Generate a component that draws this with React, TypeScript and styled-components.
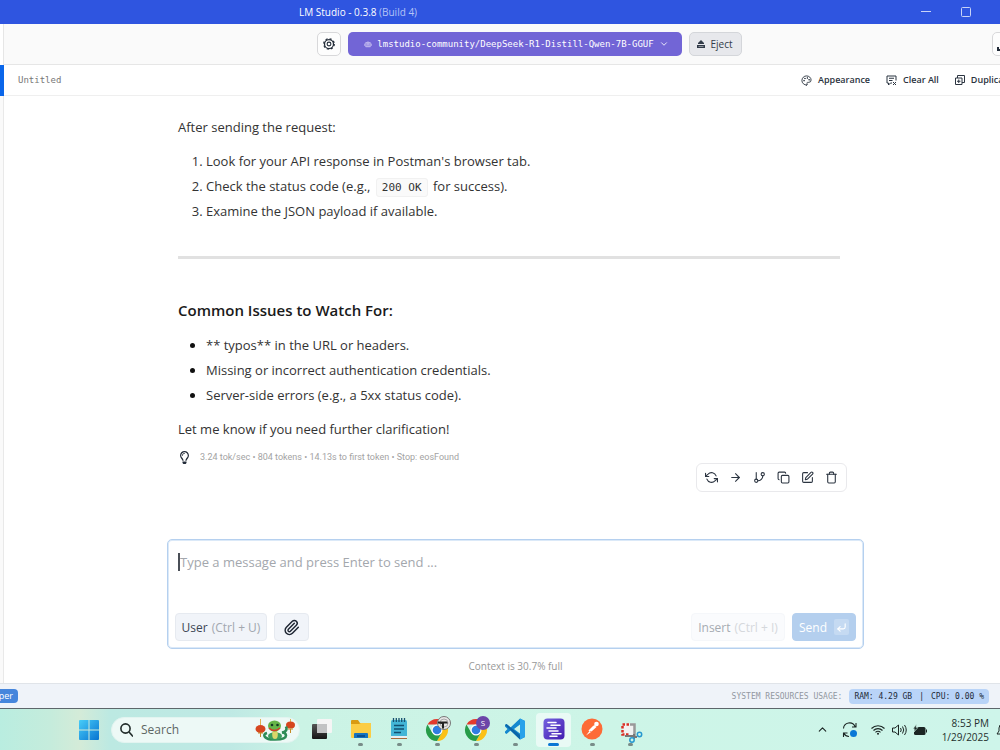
import React from "react";
import styled, { createGlobalStyle, css } from "styled-components";
import { ArrowRight, GitBranch, Copy, SquarePen, Trash, Paperclip, Palette, ChevronDown, ChevronUp, CornerDownLeft } from "lucide-react";
import { FiRefreshCcw } from "react-icons/fi";
import { FaRegLightbulb, FaRobot } from "react-icons/fa";

const sans = `"Open Sans", "Noto Sans", sans-serif`;
const mono = `"DejaVu Sans Mono", monospace`;

const GlobalStyle = createGlobalStyle`
  *, *::before, *::after { box-sizing: border-box; }
  html, body { margin: 0; }
  body { font-family: ${sans}; font-size: 13px; color: #333; background: #fff; overflow-x: hidden; }
  button, input, textarea { font: inherit; color: inherit; margin: 0; }
  button { border: 0; background: none; padding: 0; display: flex; align-items: center; justify-content: center; white-space: nowrap; }
  svg { flex: none; display: block; }
`;

const Screen = styled.div`
  min-height: 100vh;
  display: flex;
  flex-direction: column;
`;

const TitleBar = styled.header`
  height: 24px;
  flex: none;
  display: flex;
  align-items: center;
  justify-content: space-between;
  padding-left: 299px;
  background: #2f55e0;
  color: #fff;
  font-size: 10px;
`;
const Build = styled.span`
  color: #b4c3f6;
`;
const WindowButtons = styled.div`
  display: flex;
  padding-right: 14px;
`;
const WindowButton = styled.button`
  width: 40px;
  height: 22px;
`;

const ModelBar = styled.div`
  height: 41px;
  flex: none;
  display: flex;
  align-items: center;
  margin-left: 3px;
  border-left: 1px solid #e6e6e6;
  border-bottom: 1px solid #e6e6e6;
  background: #fafafa;
`;
const ModelControls = styled.div`
  flex: 1;
  display: flex;
  justify-content: center;
  gap: 7px;
  padding-left: 62px;
`;
const SquareButton = styled.button`
  width: 24px;
  height: 24px;
  flex: none;
  border: 1px solid #d8d8da;
  border-radius: 5px;
  background: #fdfdfd;
  color: #222b38;
`;
const ModelButton = styled.button`
  height: 24px;
  width: 334px;
  gap: 5px;
  padding-left: 4px;
  border-radius: 5px;
  background: #7265d6;
  color: #fff;
  font-family: ${mono};
  font-size: 9px;
`;
const EjectButton = styled.button`
  height: 24px;
  width: 53px;
  gap: 5px;
  border: 1px solid #d4d6da;
  border-radius: 5px;
  background: #e7e8ec;
  color: #333c49;
  font-size: 10px;
`;
const EdgeClip = styled.div`
  width: 8px;
  overflow: hidden;
`;

const Body = styled.div`
  flex: 1;
  display: flex;
`;
const Rail = styled.div`
  width: 4px;
  flex: none;
  background: #fafafa;
  border-right: 1px solid #e9e9e9;
`;
const RailMark = styled.div`
  width: 4px;
  height: 31px;
  background: #0a66ea;
`;
const Chat = styled.main`
  flex: 1;
  min-width: 0;
  display: flex;
  flex-direction: column;
`;
const ChatHeader = styled.div`
  height: 31px;
  flex: none;
  display: flex;
  align-items: center;
  justify-content: space-between;
  padding-left: 14px;
  border-bottom: 1px solid #efefef;
`;
const ChatTitle = styled.span`
  font-family: ${mono};
  font-size: 9px;
  color: #777;
`;
const ChatTools = styled.div`
  width: 199px;
  display: flex;
  gap: 16px;
  overflow: hidden;
`;
const ToolButton = styled.button`
  gap: 6px;
  font-size: 9px;
  line-height: 16px;
  font-weight: 600;
  color: #2b3440;
`;

const Column = styled.div`
  flex: 1;
  width: 100%;
  padding-left: 27px;
  display: flex;
  flex-direction: column;
  align-items: center;
`;
const Message = styled.article`
  width: 100%;
  max-width: 697px;
  flex: 1;
  padding: 19px 17px 40px 11px;
`;
const Prose = styled.div`
  padding-right: 7px;
  font-size: 13px;
  line-height: 25px;
`;
const Paragraph = styled.p`
  margin: 0;
`;
const list = css`
  margin: 9px 0;
  padding-left: 28px;
`;
const Numbered = styled.ol`${list}`;
const Bulleted = styled.ul`
  ${list}
  li::marker { color: #111; }
`;
const Code = styled.code`
  padding: 2px 5px;
  margin: 0 2px;
  border: 1px solid #f1f1f1;
  border-radius: 3px;
  background: #fafafa;
  font-family: ${mono};
  font-size: 11px;
  line-height: 12px;
`;
const Rule = styled.hr`
  height: 3px;
  margin: 32px 0 39px;
  border: 0;
  background: #e1e1e1;
`;
const Heading = styled.h3`
  margin: 0 0 10px;
  font-size: 15px;
  line-height: 25px;
  font-weight: 600;
  color: #1a1a1a;
`;
const MessageFooter = styled.div`
  display: flex;
  justify-content: space-between;
  padding-top: 7px;
`;
const Stats = styled.div`
  display: flex;
  align-items: center;
  gap: 9px;
  height: 16px;
  font-family: Roboto, ${sans};
  font-size: 9px;
  color: #a3a3a3;
  svg { color: #222b38; }
`;
const Actions = styled.div`
  display: flex;
  width: 151px;
  height: 29px;
  margin-top: 14px;
  padding: 0 2px;
  border: 1px solid #e9e9ec;
  border-radius: 6px;
  color: #2b3440;
`;
const Action = styled.button`
  flex: 1;
`;

const Composer = styled.form`
  width: 100%;
  max-width: 697px;
  height: 110px;
  flex: none;
  display: flex;
  flex-direction: column;
  justify-content: space-between;
  padding: 11px 7px 7px;
  border: 1px solid #b5d0ef;
  border-radius: 5px;
  box-shadow: inset 0 0 0 1px #dbe9f8;
`;
const InputRow = styled.div`
  display: flex;
  align-items: center;
  padding-left: 3px;
`;
const Caret = styled.span`
  width: 2px;
  height: 18px;
  background: #4a4f57;
`;
const Input = styled.textarea`
  flex: 1;
  height: 22px;
  padding: 0;
  border: 0;
  outline: 0;
  resize: none;
  background: none;
  font-size: 13px;
  line-height: 22px;
  &::placeholder { color: #a3a7ad; opacity: 1; }
`;
const ComposerButtons = styled.div`
  display: flex;
  gap: 7px;
`;
const ComposerButton = styled.button<{ $width: number; $tone?: "faded" | "send" }>`
  width: ${(p) => p.$width}px;
  height: 28px;
  gap: 4px;
  border: 1px solid #e6eaf0;
  border-radius: 4px;
  background: #f1f4f9;
  color: #3d4654;
  font-size: 12px;
  ${(p) => p.$tone === "faded" && css`
    margin-left: auto;
    border-color: #f5f7fa;
    background: #fafbfd;
    color: #a6abb2;
  `}
  ${(p) => p.$tone === "send" && css`
    gap: 7px;
    border-color: #b4cfee;
    background: #b4cfee;
    color: #fff;
  `}
`;
const Shortcut = styled.span<{ $faded?: boolean }>`
  color: ${(p) => (p.$faded ? "#d5d8dc" : "#a2a7af")};
`;
const EnterKey = styled.span`
  width: 15px;
  height: 16px;
  display: flex;
  align-items: center;
  justify-content: center;
  border-radius: 2px;
  background: #c5daf2;
`;
const ContextNote = styled.div`
  height: 34px;
  flex: none;
  line-height: 34px;
  font-size: 10px;
  color: #999;
`;

const StatusBar = styled.footer`
  height: 25px;
  flex: none;
  display: flex;
  align-items: center;
  justify-content: space-between;
  padding-right: 11px;
  border-top: 1px solid #e0e4e9;
  background: #eff3f9;
`;
const ModeBadge = styled.span`
  width: 18px;
  height: 14px;
  display: flex;
  justify-content: flex-end;
  padding-right: 5px;
  overflow: hidden;
  border-radius: 0 4px 4px 0;
  background: #4686dc;
  color: #fff;
  font-size: 9px;
  line-height: 14px;
`;
const Usage = styled.div`
  display: flex;
  align-items: center;
  gap: 7px;
  font-family: ${mono};
  font-size: 8px;
  color: #9298a1;
`;
const UsageBadge = styled.span`
  display: flex;
  gap: 7px;
  height: 15px;
  padding: 0 5px;
  line-height: 15px;
  border-radius: 4px;
  background: #b9d4f8;
  color: #222b38;
`;

const Taskbar = styled.nav`
  height: 42px;
  flex: none;
  display: flex;
  align-items: center;
  padding-left: 70px;
  border-top: 1px solid #5d666b;
  background: linear-gradient(90deg, #b9ede0 0, #c5ecdc 50px, #d4ebd8 80px, #bce9e2 110px, #bfe9e4 230px, #cbf3e5 300px, #cdf5e7 600px, #cef5ea 100%);
`;
const StartButton = styled.button`
  width: 38px;
  height: 40px;
  margin-right: 3px;
`;
const SearchBox = styled.label`
  width: 189px;
  height: 26px;
  flex: none;
  display: flex;
  align-items: center;
  gap: 8px;
  padding: 0 4px 0 8px;
  margin-right: 3px;
  border-radius: 13px;
  background: #edf9f6;
  border: 1px solid #e2f4f0;
`;
const SearchInput = styled.input`
  flex: 1;
  min-width: 0;
  padding: 0;
  border: 0;
  outline: 0;
  background: none;
  font-size: 12px;
  &::placeholder { color: #5d6664; opacity: 1; }
`;
const Apps = styled.div`
  display: flex;
  width: 347px;
  flex: none;
`;
const AppButton = styled.button<{ $state?: "open" | "active" }>`
  flex: 1;
  height: 34px;
  margin: 0 2px;
  flex-direction: column;
  justify-content: flex-end;
  padding: 0 0 1px;
  border-radius: 4px;
  background: ${(p) => (p.$state === "active" ? "#e9faf5" : "transparent")};
  &::after {
    content: "";
    width: ${(p) => (p.$state === "active" ? 11 : 5)}px;
    height: 3px;
    border-radius: 2px;
    background: ${(p) => (p.$state === "active" ? "#0a77d4" : p.$state ? "#788c88" : "transparent")};
  }
`;
const AppIcon = styled.span`
  height: 27px;
  display: flex;
  align-items: center;
  justify-content: center;
`;
const Tray = styled.div`
  margin-left: auto;
  display: flex;
  align-items: center;
  color: #1b2523;
`;
const TrayButton = styled.button<{ $width: number }>`
  width: ${(p) => p.$width}px;
  height: 36px;
`;
const Clock = styled.time`
  width: 56px;
  padding-right: 1px;
  text-align: right;
  white-space: nowrap;
  font-size: 10px;
  line-height: 14px;
  color: #24302d;
`;
const BellClip = styled.span`
  width: 10px;
  padding-left: 6px;
  overflow: hidden;
`;

const EjectIcon = () => (
  <svg width="8" height="8" viewBox="0 0 16 16" fill="currentColor">
    <path d="M8 0 14 6v2H2V6z" /><path d="M0 10h16v6H0zM3 12v1h10v-1z" fillRule="evenodd" />
  </svg>
);
const ClearIcon = () => (
  <svg width="11" height="11" viewBox="0 0 22 22" fill="none" stroke="currentColor" strokeWidth="2">
    <path d="M20 11V2H2v14h3v4l4-4h3M6 6.500h10M6 11h7M14 14l6 6M20 14l-6 6" />
  </svg>
);
const DuplicateIcon = () => (
  <svg width="10" height="10" viewBox="0 0 20 20" fill="none" stroke="currentColor" strokeWidth="2">
    <path d="M1 6h13v13H1zM5 6V1h14v14h-5M7.500 9v7M4 12.500h7" />
  </svg>
);
const WindowsLogo = () => (
  <svg width="20" height="20" viewBox="0 0 20 20">
    <defs><linearGradient id="win" x1="0" y1="0" x2="1" y2="1"><stop stopColor="#48cdf8" /><stop offset="1" stopColor="#0873d1" /></linearGradient></defs>
    <path fill="url(#win)" d="M1 0h8.500v9.500H0V1q0-1 1-1zM10.500 0H19q1 0 1 1v8.500h-9.500zM0 10.500h9.500V20H1q-1 0-1-1zM10.500 10.500H20V19q0 1-1 1h-8.500z" />
  </svg>
);
const Snake = () => (
  <svg width="40" height="22" viewBox="0 0 40 22">
    <path d="M5.500 0v6M35.500 0v4" stroke="#e0b050" />
    <ellipse cx="5.500" cy="10" rx="5" ry="4" fill="#d6461f" /><path d="M3 14h5M5.500 14v4" stroke="#c58a25" />
    <ellipse cx="35.500" cy="6" rx="4.500" ry="3.500" fill="#d6461f" /><path d="M33 10h5M35.500 10v4" stroke="#c58a25" />
    <path d="M12 14q-4 1-2 4 3 3 10 2.500 11 0 11-4 0-3-4-3 6-1 4-6" fill="none" stroke="#2d8b57" strokeWidth="2.600" />
    <ellipse cx="20" cy="17" rx="7" ry="3.800" fill="#3c9d60" /><ellipse cx="20" cy="15.500" rx="2.800" ry="4.500" fill="#d9d66a" />
    <ellipse cx="19.500" cy="7" rx="6.500" ry="5.500" fill="#66b548" /><path d="M14 9q5 5 11 0" stroke="#d63b2a" fill="none" strokeWidth="1.500" />
    <circle cx="17" cy="6" r="1.300" fill="#153b24" /><circle cx="22.500" cy="6" r="1.300" fill="#153b24" />
  </svg>
);
const TaskViewIcon = () => (
  <svg width="22" height="20" viewBox="0 0 22 20">
    <defs><linearGradient id="tv" x1="0" y1="0" x2="0" y2="1"><stop stopColor="#555" /><stop offset="1" stopColor="#151515" /></linearGradient></defs>
    <rect x="1" y="5" width="15" height="15" rx="1" fill="url(#tv)" /><rect x="6" y="0" width="15" height="14" rx="1" fill="#f5f5f5" /><path d="M6 5h10v9H6z" fill="#c2c3c4" />
  </svg>
);
const FolderIcon = () => (
  <svg width="22" height="20" viewBox="0 0 22 20">
    <path d="M1 2q0-1 1-1h6l2 3h11v7H1z" fill="#d99b12" /><path d="M1 5h8l2-1h10v14q0 1-1 1H2q-1 0-1-1z" fill="#fbcd44" />
    <path d="M4 19v-4q0-1 1-1h12q1 0 1 1v4z" fill="#1673be" /><path d="M7 16h8v2H7z" fill="#0b4e8f" />
  </svg>
);
const NotepadIcon = () => (
  <svg width="18" height="22" viewBox="0 0 18 22">
    <rect x="1" y="2" width="16" height="19" rx="1.500" fill="#43b5d6" /><path d="M1 18h16v2q0 1-1 1H2q-1 0-1-1z" fill="#e8eef0" /><path d="M1 20.500h16" stroke="#a66b3c" />
    <path d="M3.500 0v4M6.300 0v4M9 0v4M11.700 0v4M14.500 0v4" stroke="#17516f" strokeWidth="1.300" /><path d="M4 7.500h10M4 11h10M4 14.500h7" stroke="#124f70" strokeWidth="1.500" />
  </svg>
);
const ChromeIcon = ({ profile }: { profile: "work" | "personal" }) => (
  <svg width="26" height="26" viewBox="0 0 26 26">
    <path d="M2.470 8.500A11 11 0 0 1 21.530 8.500H12z" fill="#e33b2e" />
    <path d="M21.530 8.500A11 11 0 0 1 12 25L16.760 16.750 12 8.500z" fill="#fbc116" />
    <path d="M2.470 8.500A11 11 0 0 0 12 25L16.760 16.750H7.240z" fill="#279c49" />
    <circle cx="12" cy="14" r="5.500" fill="#fff" /><circle cx="12" cy="14" r="4.300" fill="#2f7de1" />
    {profile === "personal" ? (
      <><circle cx="19" cy="7" r="7" fill="#6c45a8" /><text x="19" y="10" fill="#fff" fontSize="8" textAnchor="middle" fontFamily="Open Sans, sans-serif">S</text></>
    ) : (
      <><circle cx="19" cy="7" r="6.500" fill="#e6e6e6" stroke="#777" /><circle cx="19" cy="7" r="4" fill="none" stroke="#aaa" /><path d="M13 5.500h9l1 2h-4v5h-2V8l-4-.5z" fill="#222" /></>
    )}
  </svg>
);
const CodeIcon = () => (
  <svg width="22" height="22" viewBox="0 0 22 22">
    <path d="M16 0.500 21 3v16l-5 2.500L6.500 12.500 2.500 16 1 15V7l1.500-1 4 3.500z" fill="#1588cf" />
    <path d="M1 7 2.500 6 16 17v4.500z" fill="#0b66a9" /><path d="M16 0.500 21 3v16l-5 2.500z" fill="#29a2ea" /><path d="M16 6.500v9L10 11zM1 8.500 3.500 11 1 13.500z" fill="#cdf5e7" />
  </svg>
);
const StudioIcon = () => (
  <svg width="22" height="22" viewBox="0 0 22 22">
    <defs><linearGradient id="lm" x1="0" y1="0" x2="1" y2="1"><stop stopColor="#7463df" /><stop offset="1" stopColor="#421bb0" /></linearGradient></defs>
    <rect x="0.500" y="0.500" width="21" height="21" rx="4" fill="url(#lm)" />
    <g stroke="#fff" strokeWidth="1.500" strokeLinecap="round"><path d="M5 4.500h8M8 7.300h9M4 10.100h9M6 12.900h9M9 15.700h9M7 18.300h7" /></g>
  </svg>
);
const PostmanIcon = () => (
  <svg width="22" height="22" viewBox="0 0 22 22">
    <circle cx="11" cy="11" r="10.500" fill="#fd6b36" /><circle cx="15.500" cy="6" r="2.300" fill="#fff" /><path d="M13.500 7 15.500 9l-5 4.500-2-1zM8.500 13l1.500 1-5 3.500z" fill="#fff" /><path d="M13 8 8 13" stroke="#fff" strokeWidth="1.500" />
  </svg>
);
const SnipIcon = () => (
  <svg width="22" height="22" viewBox="0 -4 22 22" fill="none" overflow="visible">
    <rect x="2.500" y="1.500" width="12" height="12" fill="#f2f2f2" /><path d="M10 2.500h4.500V16" stroke="#999" strokeWidth="2.500" /><path d="M9 2.500H2.500v10H9" stroke="#d92f25" strokeWidth="2.500" strokeDasharray="2.500 1.500" />
    <path d="M5 14h9M14 12v5M13 15h4" stroke="#777" strokeWidth="2" /><circle cx="19.500" cy="12.500" r="2.200" stroke="#2798d0" strokeWidth="1.500" /><circle cx="12" cy="18" r="2.200" stroke="#2798d0" strokeWidth="1.500" />
  </svg>
);
const SyncIcon = () => (
  <svg width="16" height="16" viewBox="0 0 16 16" fill="none" stroke="currentColor" strokeWidth="1.100">
    <path d="M1.500 6.500a6 6 0 0 1 11.500-2M14 1v4h-4M1.500 15v-4h4M2 11.500q1.500 3 5 3" /><circle cx="11.500" cy="11.500" r="3.500" fill="#0a78d6" stroke="none" />
  </svg>
);
const WifiIcon = () => (
  <svg width="14" height="11" viewBox="0 0 14 11" fill="none" stroke="currentColor" strokeWidth="1.100">
    <path d="M.5 4.500a9 9 0 0 1 13 0M2.500 6.500a6.300 6.300 0 0 1 9 0M4.500 8.300a3.500 3.500 0 0 1 5 0" /><circle cx="7" cy="9.700" r="1" fill="currentColor" stroke="none" />
  </svg>
);
const SpeakerIcon = () => (
  <svg width="15" height="12" viewBox="0 0 15 12" fill="none" stroke="currentColor">
    <path d="M.5 4h2.500l3.500-3v10L3 8H.5zM8.500 4q1.500 2 0 4M10.500 2.500q2.500 3.500 0 7M12.500 1q3.500 5 0 10" />
  </svg>
);
const BatteryIcon = () => (
  <svg width="14" height="12" viewBox="0 0 14 12">
    <rect x="1" y="3" width="11.500" height="8" rx="1.500" fill="currentColor" /><path d="M13 5.500h1v3h-1z" fill="currentColor" /><path d="M3.500 0 0 5h2L1 8l4-4.500H3z" fill="currentColor" stroke="#cef5ea" strokeWidth=".6" />
  </svg>
);

const apps = [
  { name: "File Explorer", icon: <FolderIcon />, state: "open" },
  { name: "Notepad", icon: <NotepadIcon />, state: "open" },
  { name: "Chrome, work", icon: <ChromeIcon profile="work" />, state: "open" },
  { name: "Chrome, personal", icon: <ChromeIcon profile="personal" />, state: "open" },
  { name: "Code editor", icon: <CodeIcon />, state: "open" },
  { name: "LM Studio", icon: <StudioIcon />, state: "active" },
  { name: "Postman", icon: <PostmanIcon />, state: "open" },
  { name: "Snipping Tool", icon: <SnipIcon />, state: "open" },
] as const;

const actions = [
  { name: "Regenerate", icon: <FiRefreshCcw size={13} /> },
  { name: "Continue", icon: <ArrowRight size={13} /> },
  { name: "Branch", icon: <GitBranch size={13} /> },
  { name: "Copy", icon: <Copy size={13} /> },
  { name: "Edit", icon: <SquarePen size={13} /> },
  { name: "Delete", icon: <Trash size={13} /> },
];

export default function App() {
  return (
    <Screen>
      <GlobalStyle />
      <TitleBar>
        <span>LM Studio - 0.3.8 <Build>(Build 4)</Build></span>
        <WindowButtons>
          <WindowButton aria-label="Minimize">
            <svg width="10" height="10" viewBox="0 0 10 10" stroke="#c9d3f7"><path d="M0 4.500h10" /></svg>
          </WindowButton>
          <WindowButton aria-label="Maximize">
            <svg width="10" height="10" viewBox="0 0 10 10" fill="none" stroke="#c9d3f7"><rect x=".5" y=".5" width="9" height="9" rx="1" /></svg>
          </WindowButton>
        </WindowButtons>
      </TitleBar>
      <ModelBar>
        <ModelControls>
          <SquareButton aria-label="Settings">
            <svg width="12" height="12" viewBox="0 0 24 24" fill="none" stroke="currentColor">
              <circle cx="12" cy="12" r="9" strokeWidth="2.500" />
              <circle cx="12" cy="12" r="10.500" strokeWidth="2.500" strokeDasharray="4.120 4.120" />
              <circle cx="12" cy="12" r="3.800" strokeWidth="2.200" />
            </svg>
          </SquareButton>
          <ModelButton>
            <FaRobot size={8} color="#b9b1ec" />
            lmstudio-community/DeepSeek-R1-Distill-Qwen-7B-GGUF
            <ChevronDown size={10} />
          </ModelButton>
          <EjectButton><EjectIcon />Eject</EjectButton>
        </ModelControls>
        <EdgeClip>
          <SquareButton aria-label="Downloads">
            <svg width="14" height="14" viewBox="0 0 14 14" fill="none" stroke="currentColor" strokeWidth="2"><path d="M1 10v3h12v-3M7 1v8M4 6l3 3 3-3" /></svg>
          </SquareButton>
        </EdgeClip>
      </ModelBar>
      <Body>
        <Rail><RailMark /></Rail>
        <Chat>
          <ChatHeader>
            <ChatTitle>Untitled</ChatTitle>
            <ChatTools>
              <ToolButton><Palette size={11} />Appearance</ToolButton>
              <ToolButton><ClearIcon />Clear All</ToolButton>
              <ToolButton><DuplicateIcon />Duplicate</ToolButton>
            </ChatTools>
          </ChatHeader>
          <Column>
            <Message>
              <Prose>
                <Paragraph>After sending the request:</Paragraph>
                <Numbered>
                  <li>Look for your API response in Postman's browser tab.</li>
                  <li>Check the status code (e.g., <Code>200 OK</Code> for success).</li>
                  <li>Examine the JSON payload if available.</li>
                </Numbered>
                <Rule />
                <Heading>Common Issues to Watch For:</Heading>
                <Bulleted>
                  <li>** typos** in the URL or headers.</li>
                  <li>Missing or incorrect authentication credentials.</li>
                  <li>Server-side errors (e.g., a 5xx status code).</li>
                </Bulleted>
                <Paragraph>Let me know if you need further clarification!</Paragraph>
              </Prose>
              <MessageFooter>
                <Stats>
                  <FaRegLightbulb size={13} />
                  3.24 tok/sec • 804 tokens • 14.13s to first token • Stop: eosFound
                </Stats>
                <Actions>
                  {actions.map((a) => <Action key={a.name} aria-label={a.name}>{a.icon}</Action>)}
                </Actions>
              </MessageFooter>
            </Message>
            <Composer onSubmit={(e) => e.preventDefault()}>
              <InputRow>
                <Caret />
                <Input aria-label="Message" placeholder="Type a message and press Enter to send ..." />
              </InputRow>
              <ComposerButtons>
                <ComposerButton type="button" $width={92}>User <Shortcut>(Ctrl + U)</Shortcut></ComposerButton>
                <ComposerButton type="button" $width={35} aria-label="Attach file"><Paperclip size={17} color="#1d2532" /></ComposerButton>
                <ComposerButton type="button" $width={94} $tone="faded">Insert <Shortcut $faded>(Ctrl + I)</Shortcut></ComposerButton>
                <ComposerButton $width={64} $tone="send">Send <EnterKey><CornerDownLeft size={11} strokeWidth={2.5} /></EnterKey></ComposerButton>
              </ComposerButtons>
            </Composer>
            <ContextNote>Context is 30.7% full</ContextNote>
          </Column>
        </Chat>
      </Body>
      <StatusBar>
        <ModeBadge>per</ModeBadge>
        <Usage>
          SYSTEM RESOURCES USAGE:
          <UsageBadge><span>RAM: 4.29 GB</span><span>|</span><span>CPU: 0.00 %</span></UsageBadge>
        </Usage>
      </StatusBar>
      <Taskbar>
        <StartButton aria-label="Start"><WindowsLogo /></StartButton>
        <SearchBox>
          <svg width="13" height="14" viewBox="0 0 13 14" fill="none" stroke="#202b29" strokeWidth="1.600"><circle cx="5.500" cy="5.500" r="4.600" /><path d="m9 9 4 4.500" /></svg>
          <SearchInput aria-label="Search" placeholder="Search" />
          <Snake />
        </SearchBox>
        <Apps>
          <AppButton aria-label="Task view"><AppIcon><TaskViewIcon /></AppIcon></AppButton>
          {apps.map((a) => (
            <AppButton key={a.name} aria-label={a.name} $state={a.state}>
              <AppIcon>{a.icon}</AppIcon>
            </AppButton>
          ))}
        </Apps>
        <Tray>
          <TrayButton $width={28} aria-label="Show hidden icons"><ChevronUp size={13} /></TrayButton>
          <TrayButton $width={28} aria-label="Sync"><SyncIcon /></TrayButton>
          <TrayButton $width={28} aria-label="Network"><WifiIcon /></TrayButton>
          <TrayButton $width={14} aria-label="Volume"><SpeakerIcon /></TrayButton>
          <TrayButton $width={28} aria-label="Battery"><BatteryIcon /></TrayButton>
          <Clock>8:53 PM<br />1/29/2025</Clock>
          <BellClip>
            <svg width="14" height="14" viewBox="0 0 14 14" fill="none" stroke="currentColor"><path d="M1 11h12l-2-3V5a4 4 0 0 0-8 0v3z" /></svg>
          </BellClip>
        </Tray>
      </Taskbar>
    </Screen>
  );
}
